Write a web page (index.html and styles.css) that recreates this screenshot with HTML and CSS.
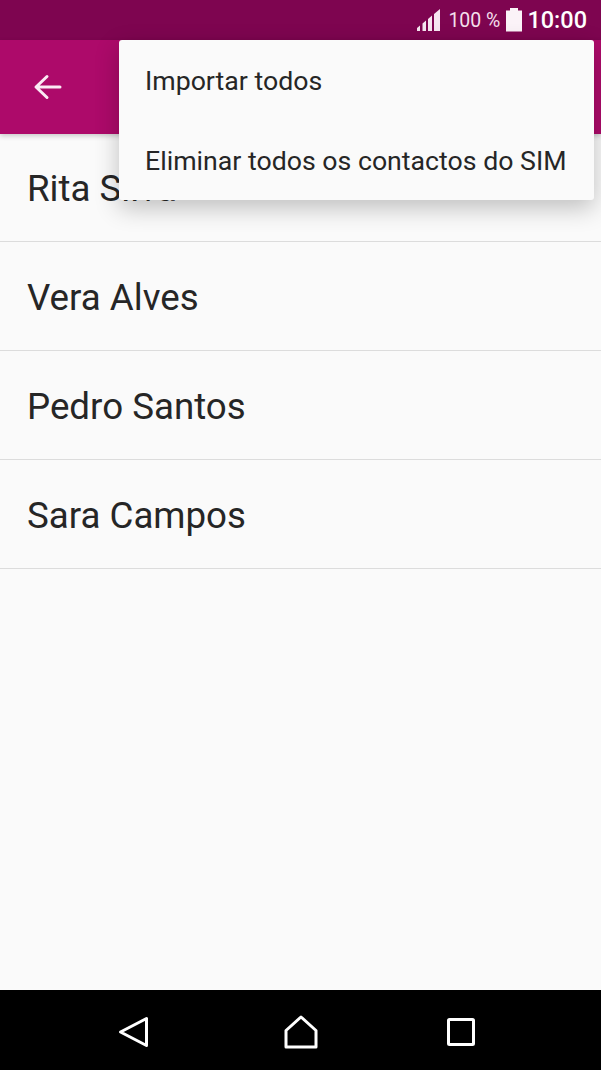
FILE: index.html
```html
<!DOCTYPE html>
<html lang="pt">
<head>
    <meta charset="UTF-8">
    <meta name="viewport" content="width=device-width, initial-scale=1.0">
    <title>Contactos do SIM</title>
    <link rel="stylesheet" href="styles.css">
</head>
<body>
    <div class="phone">
        <div class="status-bar">
            <svg class="signal" width="24" height="24" viewBox="0 0 24 24">
                <path d="M0 23h3v-5.500l-3 2.500zM5.500 23h3.500v-10.500l-3.500 3zM11 23h4v-15.400l-4 3.400zM17 23h6v-22l-6 5z" fill="#f6e6f0"/>
            </svg>
            <span class="battery-text">100 %</span>
            <svg class="battery" width="16" height="24" viewBox="0 0 16 24">
                <path d="M4 0h8v2.500h4v21h-16v-21h4z" fill="#fbf3f8"/>
            </svg>
            <span class="clock">10:00</span>
        </div>

        <div class="toolbar">
            <svg width="30" height="30" viewBox="0 0 30 30">
                <path d="M28 15H5M15 4.500L4 15l11 10.500" fill="none" stroke="#fbeaf4" stroke-width="3" stroke-linecap="round" stroke-linejoin="round"/>
            </svg>
        </div>

        <div class="contact-list">
            <div class="contact">Rita Silva</div>
            <div class="contact">Vera Alves</div>
            <div class="contact">Pedro Santos</div>
            <div class="contact">Sara Campos</div>
        </div>

        <div class="nav-bar">
            <svg width="32" height="32" viewBox="0 0 32 32">
                <path d="M28.500 2.500v27L2.500 16z" fill="none" stroke="#fff" stroke-width="3" stroke-linejoin="round"/>
            </svg>
            <svg class="nav-home" width="36" height="34" viewBox="0 0 36 34">
                <path d="M18 2L33 15.500v16.500h-30v-16.500z" fill="none" stroke="#fff" stroke-width="3" stroke-linejoin="round"/>
            </svg>
            <svg width="28" height="28" viewBox="0 0 28 28">
                <rect x="1.500" y="1.500" width="25" height="25" rx="1" fill="none" stroke="#fff" stroke-width="3"/>
            </svg>
        </div>

        <div class="menu">
            <div class="menu-item">Importar todos</div>
            <div class="menu-item">Eliminar todos os contactos do SIM</div>
        </div>
    </div>
</body>
</html>
```

FILE: styles.css
```css
html, body {
    margin: 0;
    padding: 0;
}
body {
    font-family: Roboto, "Liberation Sans", sans-serif;
    background-color: #fafafa;
}
.phone {
    position: relative;
    display: flex;
    flex-direction: column;
    height: 1070px;
    overflow: hidden;
}
.status-bar {
    display: flex;
    align-items: center;
    justify-content: flex-end;
    height: 40px;
    padding-right: 14px;
    background-color: #7e0550;
    color: #fff;
}
.signal {
    margin-right: 7px;
}
.battery-text {
    font-size: 19.500px;
    color: #f3dfeb;
    margin-right: 6px;
}
.battery {
    margin-right: 5px;
}
.clock {
    font-size: 23.500px;
    font-weight: 500;
}
.toolbar {
    display: flex;
    align-items: center;
    height: 94px;
    padding-left: 32px;
    background-color: #ad0a6a;
    box-shadow: 0 2px 5px rgba(0, 0, 0, 0.2);
}
.contact-list {
    flex: 1;
}
.contact {
    display: flex;
    align-items: center;
    height: 106px;
    padding: 2px 0 0 27px;
    border-bottom: 1px solid #dcdcdc;
    font-size: 36.700px;
    color: #262626;
}
.contact:first-child {
    height: 105px;
}
.nav-bar {
    display: flex;
    align-items: center;
    justify-content: space-between;
    height: 80px;
    padding: 4px 126px 0 118px;
    box-sizing: border-box;
    background-color: #000;
}
.nav-home {
    margin-left: 4px;
}
.menu {
    position: absolute;
    top: 40px;
    left: 119px;
    width: 475px;
    height: 160px;
    background-color: #fafafa;
    border-radius: 3px;
    box-shadow: 0 8px 24px rgba(0, 0, 0, 0.24);
}
.menu-item {
    display: flex;
    align-items: center;
    height: 80px;
    padding: 2px 0 0 26px;
    box-sizing: border-box;
    font-size: 26.700px;
    color: #262626;
}
```
